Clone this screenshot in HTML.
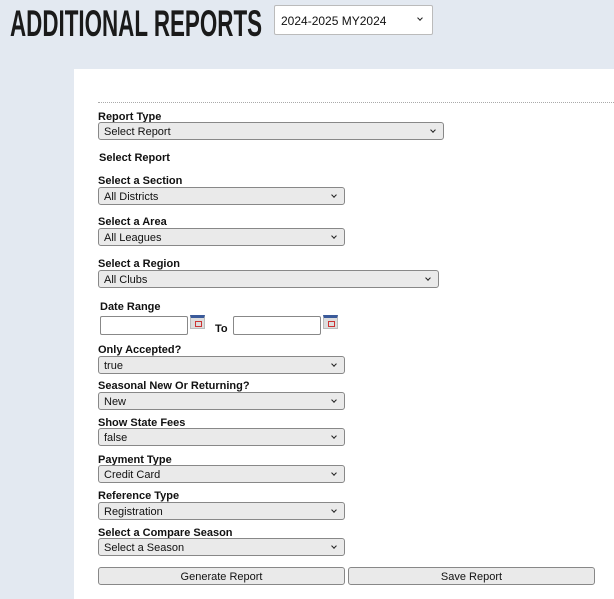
<!DOCTYPE html>
<html><head><meta charset="utf-8"><style>
*{box-sizing:border-box;margin:0;padding:0}
body{width:614px;height:599px;background:#e3e9f1;position:relative;overflow:hidden;font-family:"Liberation Sans",Arial,sans-serif}
.title{position:absolute;left:10px;top:3px;font-size:37px;font-weight:bold;color:#1a1a1a;transform:scaleX(0.605);transform-origin:left top;white-space:nowrap}
.topsel{position:absolute;left:274px;top:5px;width:159px;height:30px;background:#fff;border:1px solid #bbb;border-radius:2px;font-size:12px;padding:8px 0 0 6px;color:#111}
.panel{position:absolute;left:74px;top:69px;width:540px;height:530px;background:#fff}
.dots{position:absolute;left:98px;top:102px;width:516px;border-top:1px dotted #aaa}
.lbl{position:absolute;left:98px;font-size:11px;font-weight:bold;color:#111;margin-top:1px}
.sel{position:absolute;left:98px;height:18px;background:#eaeaea;border:1px solid #888;border-radius:3px;font-size:11px;padding:3px 0 0 5px;color:#111}
.chev{position:absolute;right:8px;top:5px;width:4px;height:4px;border-right:1px solid #222;border-bottom:1px solid #222;transform:rotate(45deg)}
.inp{position:absolute;top:316px;width:88px;height:19px;border:1px solid #888;border-radius:2px;background:#fff}
.cal{position:absolute;top:315px;width:15px;height:14px;background:#ddd;border:1px solid #bbb;border-top:3px solid #3a5a9a}
.cal:after{content:"";position:absolute;right:2px;top:3px;width:5px;height:4px;border:1px solid #c33}
.btn{position:absolute;top:567px;height:18px;background:#eaeaea;border:1px solid #888;border-radius:3px;font-size:11px;text-align:center;padding-top:3px;color:#111}
</style></head><body>
<div class="title">ADDITIONAL REPORTS</div>
<div class="topsel">2024-2025 MY2024<span class="chev" style="right:10px;top:10px"></span></div>
<div class="panel"></div>
<div class="dots"></div>
<div class="lbl" style="top:110px">Report Type</div>
<div class="sel" style="top:122px;width:346px">Select Report<span class="chev"></span></div>
<div class="lbl" style="top:151px;left:99px">Select Report</div>
<div class="lbl" style="top:174px">Select a Section</div>
<div class="sel" style="top:187px;width:247px">All Districts<span class="chev"></span></div>
<div class="lbl" style="top:215px">Select a Area</div>
<div class="sel" style="top:228px;width:247px">All Leagues<span class="chev"></span></div>
<div class="lbl" style="top:257px">Select a Region</div>
<div class="sel" style="top:270px;width:341px">All Clubs<span class="chev"></span></div>
<div class="lbl" style="top:300px;left:100px">Date Range</div>
<div class="inp" style="left:100px"></div>
<div class="cal" style="left:190px"></div>
<div class="lbl" style="top:322px;left:215px">To</div>
<div class="inp" style="left:233px"></div>
<div class="cal" style="left:323px"></div>
<div class="lbl" style="top:343px">Only Accepted?</div>
<div class="sel" style="top:356px;width:247px">true<span class="chev"></span></div>
<div class="lbl" style="top:379px">Seasonal New Or Returning?</div>
<div class="sel" style="top:392px;width:247px">New<span class="chev"></span></div>
<div class="lbl" style="top:416px">Show State Fees</div>
<div class="sel" style="top:428px;width:247px">false<span class="chev"></span></div>
<div class="lbl" style="top:453px">Payment Type</div>
<div class="sel" style="top:465px;width:247px">Credit Card<span class="chev"></span></div>
<div class="lbl" style="top:489px">Reference Type</div>
<div class="sel" style="top:502px;width:247px">Registration<span class="chev"></span></div>
<div class="lbl" style="top:526px">Select a Compare Season</div>
<div class="sel" style="top:538px;width:247px">Select a Season<span class="chev"></span></div>
<div class="btn" style="left:98px;width:247px">Generate Report</div>
<div class="btn" style="left:348px;width:247px">Save Report</div>
</body></html>
